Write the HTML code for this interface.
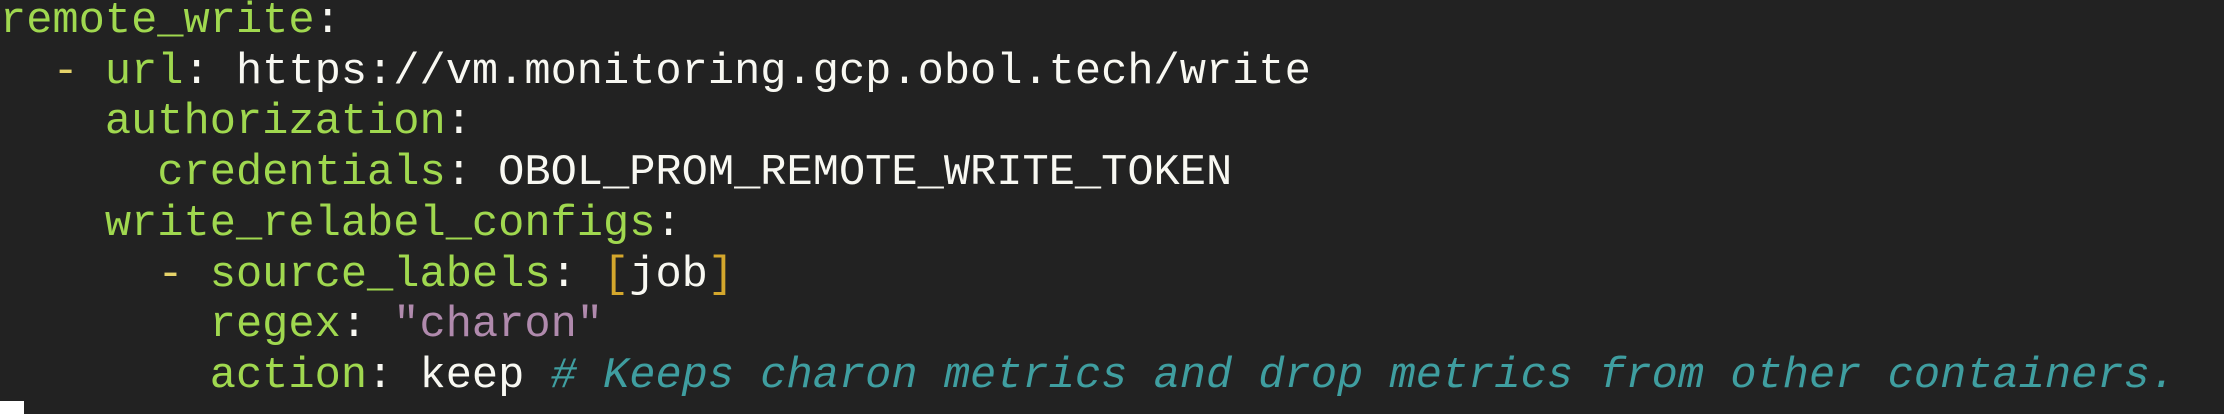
<!DOCTYPE html>
<html><head><style>
html,body{margin:0;padding:0;background:#222222;width:2224px;height:414px;overflow:hidden}
pre{margin:0;position:absolute;left:0;top:-3px;font-family:"Liberation Mono",monospace;font-size:43.7px;line-height:50.7px;color:#f8f8f2;white-space:pre}
.k{color:#a0d84f}.d{color:#e6d36a}.s{color:#b08aad}.c{color:#3f9ea0;font-style:italic}.b{color:#d4a72c}
.sq{position:absolute;left:0;top:401px;width:24px;height:13px;background:#fff}
</style></head><body>
<pre><span class="k">remote_write</span>:
  <span class="d">-</span> <span class="k">url</span>: https://vm.monitoring.gcp.obol.tech/write
    <span class="k">authorization</span>:
      <span class="k">credentials</span>: OBOL_PROM_REMOTE_WRITE_TOKEN
    <span class="k">write_relabel_configs</span>:
      <span class="d">-</span> <span class="k">source_labels</span>: <span class="b">[</span>job<span class="b">]</span>
        <span class="k">regex</span>: <span class="s">"charon"</span>
        <span class="k">action</span>: keep <span class="c"># Keeps charon metrics and drop metrics from other containers.</span></pre>
<div class="sq"></div>
</body></html>
